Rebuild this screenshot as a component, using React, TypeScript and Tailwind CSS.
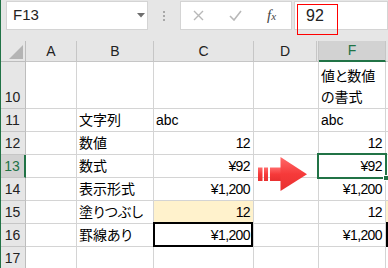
import React from "react";

type Row = {
  n: number;
  h: string;
  b?: string;
  c?: string;
  cLeft?: boolean;
  f?: React.ReactNode;
  fLeft?: boolean;
  sel?: boolean;
  fill?: boolean;
  box?: boolean;
};

const rows: Row[] = [
  { n: 10, h: "h-[47px]", f: (<>値と数値<br />の書式</>), fLeft: true },
  { n: 11, h: "h-[23px]", b: "文字列", c: "abc", cLeft: true, f: "abc", fLeft: true },
  { n: 12, h: "h-[23px]", b: "数値", c: "12", f: "12" },
  { n: 13, h: "h-[23px]", b: "数式", c: "¥92", f: "¥92", sel: true },
  { n: 14, h: "h-[23px]", b: "表示形式", c: "¥1,200", f: "¥1,200" },
  { n: 15, h: "h-[23px]", b: "塗りつぶし", c: "12", f: "12", fill: true },
  { n: 16, h: "h-[23px]", b: "罫線あり", c: "¥1,200", f: "¥1,200", box: true },
  { n: 17, h: "h-[23px]" },
];

function Arrow() {
  return (
    <svg
      className="absolute left-[4px] top-[2px] z-10"
      width="50"
      height="35"
      viewBox="0 0 50 35"
    >
      <defs>
        <linearGradient id="rg" x1="0" y1="0" x2="0" y2="1">
          <stop offset="0" stopColor="#ff6a6a" />
          <stop offset="0.5" stopColor="#f63a3a" />
          <stop offset="1" stopColor="#e83030" />
        </linearGradient>
      </defs>
      <rect x="0" y="10.5" width="4.5" height="13.5" fill="url(#rg)" />
      <rect x="6" y="10.5" width="4" height="13.5" fill="url(#rg)" />
      <rect x="12" y="10.5" width="11" height="13.5" fill="url(#rg)" />
      <polygon points="22.5,0 49,17.2 22.5,34" fill="url(#rg)" />
    </svg>
  );
}

export default function App() {
  const grid = "border-[#d4d4d4]";
  return (
    <div className="relative w-[388px] h-[268px] overflow-hidden bg-white text-black font-['Liberation_Sans','Noto_Sans_CJK_JP',sans-serif] [font-feature-settings:'palt']">
      {/* window edge */}
      <div className="absolute left-0 top-0 bottom-0 w-[1px] bg-[#217346] z-30" />

      {/* formula bar */}
      <div className="h-[41px] bg-[#e6e6e6] flex items-start pt-[1px]">
        <div className="ml-[6px] w-[142px] h-[29px] bg-white border border-[#d4d4d4] flex items-center relative">
          <span className="pl-[6px] text-[15px] text-[#222]">F13</span>
          <svg className="absolute left-[130px] top-[11px]" width="8" height="5" viewBox="0 0 8 5">
            <polygon points="0,0 8,0 4,4.5" fill="#6e6e6e" />
          </svg>
        </div>
        <div className="w-[32px] h-[29px] flex flex-col items-center justify-center gap-[2px]">
          <span className="w-[2px] h-[2px] bg-[#a8a8a8]" />
          <span className="w-[2px] h-[2px] bg-[#a8a8a8]" />
          <span className="w-[2px] h-[2px] bg-[#a8a8a8]" />
        </div>
        <div className="w-[112px] h-[29px] bg-white border border-[#d4d4d4] flex items-center">
          <svg className="ml-[12px]" width="11" height="11" viewBox="0 0 11 11">
            <path d="M1 1 L10 10 M10 1 L1 10" stroke="#b8b8b8" strokeWidth="1.4" />
          </svg>
          <svg className="ml-[25px]" width="13" height="11" viewBox="0 0 13 11">
            <path d="M1 6 L5 10 L12 1" stroke="#b8b8b8" strokeWidth="1.6" fill="none" />
          </svg>
          <span className="ml-[25px] font-['Liberation_Serif',serif] italic text-[15px] text-[#444] leading-none">
            f<span className="text-[11px]">x</span>
          </span>
        </div>
        <div className="ml-[2px] flex-1 h-[29px] bg-white border border-[#d4d4d4] flex items-center">
          <span className="pl-[11px] text-[16px] text-[#222]">92</span>
        </div>
      </div>

      {/* red annotation */}
      <div className="absolute left-[297px] top-[4px] w-[41px] h-[31px] border border-[#ff0000] z-20" />

      {/* sheet */}
      <div className="grid grid-cols-[26px_51px_77px_100px_63px_2px_67px_1fr] text-[14px]">
        {/* header row */}
        <div className="h-[21px] bg-[#e6e6e6] border-r border-b border-[#bdbdbd] relative">
          <svg className="absolute left-[9px] top-[4px]" width="14" height="14" viewBox="0 0 14 14">
            <polygon points="14,0 14,14 0,14" fill="#b4b4b4" />
          </svg>
        </div>
        {["A", "B", "C", "D", ""].map((l, i) => (
          <div
            key={i}
            className="h-[21px] bg-[#e6e6e6] border-r border-b border-[#c6c6c6] flex items-center justify-center text-[#222]"
          >
            {l}
          </div>
        ))}
        <div className="h-[21px] bg-[#d2d2d2] border-r border-[#c6c6c6] border-b-2 border-b-[#217346] flex items-center justify-center text-[#217346]">
          F
        </div>
        <div className="h-[21px] bg-[#e6e6e6] border-b border-[#c6c6c6]" />

        {rows.map((r) => (
          <React.Fragment key={r.n}>
            <div
              className={`${r.h} border-b border-[#c6c6c6] flex items-end justify-center leading-[21px] ${
                r.sel
                  ? "bg-[#d2d2d2] text-[#217346] border-r-2 border-r-[#217346]"
                  : "bg-[#e6e6e6] text-[#222] border-r border-r-[#bdbdbd]"
              }`}
            >
              {r.n}
            </div>
            <div className={`${r.h} border-r border-b ${grid}`} />
            <div className={`${r.h} border-r border-b ${grid} flex items-end pl-[2px] leading-[21px] whitespace-nowrap`}>
              {r.b}
            </div>
            <div
              className={`${r.h} border-r border-b ${grid} relative flex items-end leading-[21px] ${
                r.cLeft ? "justify-start pl-[2px]" : "justify-end pr-[3px] tracking-[-0.6px]"
              } ${r.fill ? "bg-[#fff2cc]" : ""}`}
            >
              {r.c}
              {r.box && (
                <div className="absolute left-[-1px] top-[-2px] w-[100px] h-[25px] border-2 border-black" />
              )}
            </div>
            <div className={`${r.h} border-b ${grid} relative`}>{r.sel && <Arrow />}</div>
            <div className={`${r.h} border-r border-b ${grid}`} />
            <div
              className={`${r.h} border-r border-b ${grid} relative flex items-end leading-[21px] ${
                r.fLeft ? "justify-start pl-[2px]" : "justify-end pr-[3px] tracking-[-0.6px]"
              }`}
            >
              <span>{r.f}</span>
              {r.sel && (
                <>
                  <div className="absolute left-[-2px] top-[-2px] w-[70px] h-[26px] border-2 border-[#217346] z-10" />
                  <div className="absolute left-[64px] top-[20px] w-[6px] h-[6px] bg-[#217346] border border-white z-10" />
                </>
              )}
            </div>
            <div
              className={`${r.h} border-b ${grid} relative ${r.fill ? "bg-[#fff2cc]" : ""}`}
            >
              {r.box && (
                <div className="absolute left-0 top-[-2px] w-[100px] h-[25px] border-2 border-black" />
              )}
            </div>
          </React.Fragment>
        ))}
      </div>
    </div>
  );
}
